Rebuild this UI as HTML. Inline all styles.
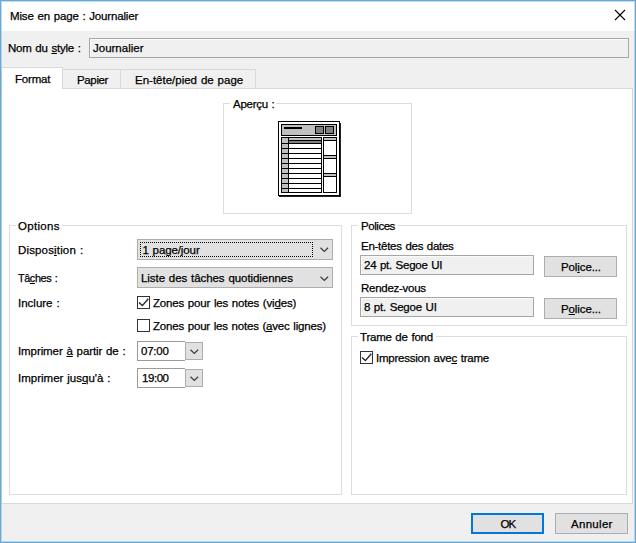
<!DOCTYPE html>
<html lang="fr">
<head>
<meta charset="utf-8">
<title>Mise en page : Journalier</title>
<style>
html,body{margin:0;padding:0;}
body{width:636px;height:543px;position:relative;overflow:hidden;background:#f0f0f0;
 font-family:"Liberation Sans",sans-serif;font-size:11.5px;color:#000;}
.abs,.t,.box{position:absolute;box-sizing:border-box;}
.t{white-space:nowrap;line-height:14px;height:14px;-webkit-text-stroke:0.25px #000;word-spacing:0.7px;}
u{text-decoration:underline;text-underline-offset:1px;text-decoration-thickness:1px;}
#title{left:0;top:0;width:636px;height:31px;background:#fff;}
.grp{border:1px solid #dcdcdc;}
.lbl{background:#fff;height:14px;}
.inp{background:#f0f0f0;border:1px solid #a6a6a6;box-shadow:inset 1px 1px 0 #fbfbfb;}
.combo{background:#e1e1e1;border:1px solid #adadad;}
.btn{background:#e1e1e1;border:1px solid #adadad;}
.edit{background:#fff;border:1px solid #9a9a9a;border-right:none;}
.chk{width:13px;height:13px;background:#fff;border:1px solid #333;}
svg{position:absolute;overflow:visible;}
</style>
</head>
<body>
<div class="abs" id="title"></div>
<div class="t" style="left:10px;top:9px;letter-spacing:-0.15px;">Mise en page : Journalier</div>
<svg style="left:615px;top:10px" width="10" height="10" viewBox="0 0 10 10"><path d="M0 0 L10 10 M10 0 L0 10" stroke="#000" stroke-width="1.1" fill="none"/></svg>

<div class="t" style="left:8px;top:41px;letter-spacing:-0.21px;">Nom du <u>s</u>tyle :</div>
<div class="box inp" style="left:89px;top:38px;width:540px;height:20px;"></div>
<div class="t" style="left:93px;top:41px;letter-spacing:0px;">Journalier</div>

<!-- tab panel -->
<div class="box" style="left:1px;top:88px;width:632px;height:416px;background:#fff;border:1px solid #d9d9d9;"></div>
<!-- tabs -->
<div class="box" style="left:62px;top:69px;width:194px;height:20px;background:#f0f0f0;border:1px solid #d9d9d9;"></div>
<div class="box" style="left:120px;top:69px;width:1px;height:20px;background:#d9d9d9;"></div>
<div class="box" style="left:1px;top:67px;width:62px;height:22px;background:#fff;border:1px solid #d9d9d9;border-bottom:none;"></div>
<div class="t" style="left:15px;top:72px;letter-spacing:-0.18px;">Format</div>
<div class="t" style="left:77px;top:73px;letter-spacing:-0.36px;">Papier</div>
<div class="t" style="left:135px;top:73px;letter-spacing:0px;">En-tête/pied de page</div>

<!-- Aperçu group -->
<div class="box grp" style="left:223px;top:103px;width:189px;height:111px;"></div>
<div class="box lbl" style="left:230px;top:97px;width:46px;"></div>
<div class="t" style="left:233px;top:97px;letter-spacing:-0.26px;">Aperçu :</div>

<!-- preview icon -->
<svg style="left:278px;top:121px" width="63" height="76" viewBox="0 0 63 76" shape-rendering="crispEdges">
<rect x="62" y="2" width="1" height="74" fill="#222"/>
<rect x="1" y="75" width="62" height="1" fill="#222"/>
<rect x="0.5" y="0.5" width="61" height="74" fill="#fff" stroke="#000"/>
<rect x="3.5" y="3.5" width="55" height="11" fill="#c0c0c0" stroke="#000"/>
<rect x="6" y="6" width="18" height="2" fill="#000"/>
<rect x="37.5" y="5.5" width="8" height="7" fill="#808080" stroke="#000"/>
<rect x="47.5" y="5.5" width="8" height="7" fill="#808080" stroke="#000"/>
<rect x="3.5" y="16.5" width="40" height="55" fill="#fff" stroke="#000"/>
<rect x="4" y="17" width="6" height="54" fill="#c0c0c0"/>
<rect x="10" y="17" width="1" height="54" fill="#000"/>
<rect x="11" y="17" width="32" height="2" fill="#c0c0c0"/>
<rect x="11" y="19" width="32" height="1" fill="#000"/>
<rect x="11" y="20" width="32" height="2" fill="#808080"/>
<g fill="#000">
<rect x="4" y="22" width="39" height="1"/><rect x="4" y="27" width="39" height="1"/><rect x="4" y="32" width="39" height="1"/>
<rect x="4" y="37" width="39" height="1"/><rect x="4" y="42" width="39" height="1"/><rect x="4" y="47" width="39" height="1"/>
<rect x="4" y="52" width="39" height="1"/><rect x="4" y="57" width="39" height="1"/><rect x="4" y="62" width="39" height="1"/>
<rect x="4" y="67" width="39" height="1"/>
</g>
<rect x="45.5" y="16.5" width="13" height="55" fill="#fff" stroke="#000"/>
<rect x="46" y="17" width="12" height="2" fill="#c0c0c0"/><rect x="46" y="19" width="12" height="1" fill="#000"/>
<rect x="46" y="34" width="12" height="1" fill="#000"/><rect x="46" y="35" width="12" height="2" fill="#c0c0c0"/><rect x="46" y="37" width="12" height="1" fill="#000"/>
<rect x="46" y="52" width="12" height="1" fill="#000"/><rect x="46" y="53" width="12" height="2" fill="#c0c0c0"/><rect x="46" y="55" width="12" height="1" fill="#000"/>
</svg>

<!-- Options group -->
<div class="box grp" style="left:9px;top:225px;width:333px;height:270px;"></div>
<div class="box lbl" style="left:16px;top:219px;width:46px;"></div>
<div class="t" style="left:18px;top:219px;letter-spacing:0.3px;">Options</div>
<div class="t" style="left:18px;top:243px;letter-spacing:0.15px;">Dispos<u>i</u>tion :</div>
<div class="box combo" style="left:137px;top:239px;width:196px;height:21px;"></div>
<div class="box" style="left:140px;top:242px;width:173px;height:15px;border:1px dotted #000;"></div>
<div class="t" style="left:142.5px;top:243px;letter-spacing:-0.1px;">1 page/jour</div>
<svg style="left:320px;top:247px" width="9" height="5" viewBox="0 0 9 5"><path d="M0.5 0.8 L4.3 4.5 L8.1 0.8" stroke="#3c3c3c" stroke-width="1.25" fill="none"/></svg>
<div class="t" style="left:18px;top:271px;letter-spacing:-0.4px;word-spacing:1px;transform:scaleX(0.94);transform-origin:0 0;">Tâ<u>c</u>hes :</div>
<div class="box combo" style="left:137px;top:267px;width:196px;height:21px;"></div>
<div class="t" style="left:141px;top:271px;letter-spacing:-0.06px;">Liste des tâches quotidiennes</div>
<svg style="left:320px;top:276px" width="9" height="5" viewBox="0 0 9 5"><path d="M0.5 0.8 L4.3 4.5 L8.1 0.8" stroke="#3c3c3c" stroke-width="1.25" fill="none"/></svg>
<div class="t" style="left:18px;top:296px;letter-spacing:0px;">Inclure :</div>
<div class="box chk" style="left:137px;top:296px;"></div>
<svg style="left:137px;top:296px" width="13" height="13" viewBox="0 0 13 13"><path d="M2 6.4 L5.4 9.6 L11.3 2.8" stroke="#222" stroke-width="1.35" fill="none"/></svg>
<div class="t" style="left:153px;top:296px;letter-spacing:-0.17px;">Zones pour les notes (vi<u>d</u>es)</div>
<div class="box chk" style="left:137px;top:319px;"></div>
<div class="t" style="left:153px;top:319px;letter-spacing:-0.19px;">Zones pour les notes (<u>a</u>vec lignes)</div>
<div class="t" style="left:18px;top:344px;letter-spacing:-0.09px;">Imprimer <u>à</u> partir de :</div>
<div class="box edit" style="left:137px;top:341px;width:48px;height:20px;"></div>
<div class="box btn" style="left:185px;top:342px;width:18px;height:18px;"></div>
<svg style="left:190px;top:349px" width="9" height="5" viewBox="0 0 9 5"><path d="M0.5 0.8 L4.3 4.5 L8.1 0.8" stroke="#3c3c3c" stroke-width="1.25" fill="none"/></svg>
<div class="t" style="left:141px;top:344px;letter-spacing:-0.23px;">07:00</div>
<div class="t" style="left:18px;top:371px;letter-spacing:0px;">Imprimer jus<u>q</u>u'à :</div>
<div class="box edit" style="left:137px;top:368px;width:48px;height:20px;"></div>
<div class="box btn" style="left:185px;top:369px;width:18px;height:18px;"></div>
<svg style="left:190px;top:376px" width="9" height="5" viewBox="0 0 9 5"><path d="M0.5 0.8 L4.3 4.5 L8.1 0.8" stroke="#3c3c3c" stroke-width="1.25" fill="none"/></svg>
<div class="t" style="left:142px;top:371px;letter-spacing:-0.45px;">19:00</div>

<!-- Polices group -->
<div class="box grp" style="left:351px;top:225px;width:276px;height:101px;"></div>
<div class="box lbl" style="left:358px;top:219px;width:40px;"></div>
<div class="t" style="left:361px;top:219px;letter-spacing:-0.45px;">Polices</div>
<div class="t" style="left:361px;top:239px;letter-spacing:-0.26px;">En-têtes des dates</div>
<div class="box inp" style="left:360px;top:255px;width:174px;height:20px;"></div>
<div class="t" style="left:364px;top:258px;letter-spacing:-0.25px;">24 pt. Segoe UI</div>
<div class="box btn" style="left:544px;top:256px;width:73px;height:21px;"></div>
<div class="t" style="left:561px;top:260px;letter-spacing:-0.11px;">Pol<u>i</u>ce...</div>
<div class="t" style="left:361px;top:281px;letter-spacing:-0.27px;">Rendez-vous</div>
<div class="box inp" style="left:360px;top:297px;width:174px;height:20px;"></div>
<div class="t" style="left:364px;top:300px;letter-spacing:-0.21px;">8 pt. Segoe UI</div>
<div class="box btn" style="left:544px;top:298px;width:73px;height:21px;"></div>
<div class="t" style="left:561px;top:302px;letter-spacing:-0.11px;">P<u>o</u>lice...</div>

<!-- Trame group -->
<div class="box grp" style="left:351px;top:336px;width:276px;height:159px;"></div>
<div class="box lbl" style="left:358px;top:330px;width:78px;"></div>
<div class="t" style="left:360px;top:330px;letter-spacing:-0.22px;">Trame de fond</div>
<div class="box chk" style="left:360px;top:351px;"></div>
<svg style="left:360px;top:351px" width="13" height="13" viewBox="0 0 13 13"><path d="M2 6.4 L5.4 9.6 L11.3 2.8" stroke="#222" stroke-width="1.35" fill="none"/></svg>
<div class="t" style="left:376px;top:351px;letter-spacing:-0.23px;">Impression ave<u>c</u> trame</div>

<!-- buttons -->
<div class="box btn" style="left:471px;top:513px;width:73px;height:21px;border:2px solid #0078d7;"></div>
<div class="t" style="left:500.5px;top:517px;letter-spacing:-1px;">OK</div>
<div class="box btn" style="left:555px;top:513px;width:73px;height:21px;"></div>
<div class="t" style="left:571px;top:517px;letter-spacing:0.3px;">Annuler</div>

<!-- window frame -->
<div class="abs" style="left:1px;top:1px;width:634px;height:541px;border:1px solid rgba(130,195,235,0.55);"></div>
<div class="abs" style="left:0;top:0;width:636px;height:543px;border:1px solid #6aa7d4;"></div>
</body>
</html>
